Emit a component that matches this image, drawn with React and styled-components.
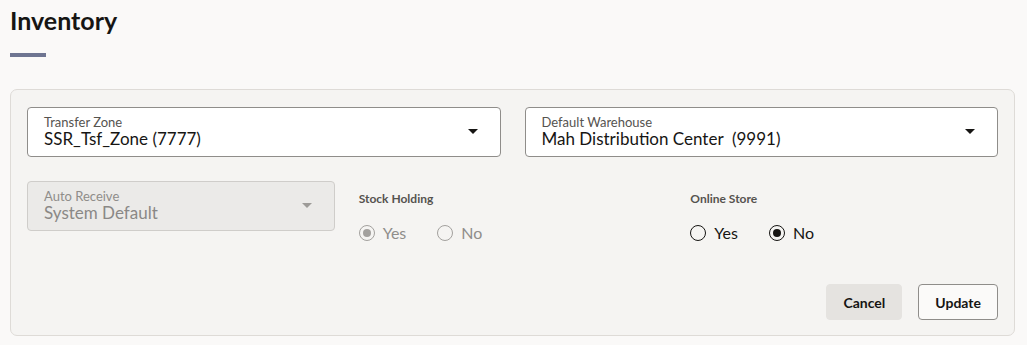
import React, { useState } from 'react';
import styled, { createGlobalStyle, css } from 'styled-components';

const GlobalStyle = createGlobalStyle`
  html, body {
    margin: 0;
    padding: 0;
    background: #faf9f8;
  }
  body {
    font-family: Lato, "Noto Sans", "Liberation Sans", sans-serif;
    color: #161513;
  }
`;

const Page = styled.div`
  padding: 4px 12px 10px 10px;
`;

const Title = styled.h1`
  margin: 0;
  font-size: 25px;
  line-height: 32px;
  font-weight: 700;
  color: #161513;
`;

const TitleBar = styled.div`
  width: 36px;
  height: 4px;
  margin-top: 17px;
  background: #6e7591;
`;

const Panel = styled.section`
  margin-top: 32px;
  padding: 17px 16px 15px 16px;
  background: #f5f4f2;
  border: 1px solid #dedbd7;
  border-radius: 7px;
  display: flex;
  flex-direction: column;
`;

const Grid = styled.div`
  display: grid;
  grid-template-columns: repeat(${(p) => p.$cols}, 1fr);
  column-gap: 24px;
  & + & {
    margin-top: 24px;
  }
`;

const SelectBox = styled.div`
  position: relative;
  height: 50px;
  box-sizing: border-box;
  padding: 7px 48px 7px 16px;
  border-radius: 4px;
  display: flex;
  flex-direction: column;
  justify-content: center;
  ${(p) =>
    p.$disabled
      ? css`
          background: #ebeae8;
          border: 1px solid #cfcdca;
          color: #8a8886;
        `
      : css`
          background: #ffffff;
          border: 1px solid #8f8d8a;
          color: #161513;
        `}
`;

const FieldLabel = styled.span`
  font-size: 13px;
  line-height: 14px;
  color: ${(p) => (p.$disabled ? '#8f8d8a' : '#55534f')};
`;

const FieldValue = styled.span`
  font-size: 17px;
  line-height: 20px;
  white-space: pre;
`;

const Caret = styled.span`
  position: absolute;
  right: 22px;
  top: 50%;
  margin-top: -3px;
  width: 0;
  height: 0;
  border-left: 5px solid transparent;
  border-right: 5px solid transparent;
  border-top: 5px solid ${(p) => (p.$disabled ? '#9d9b98' : '#161513')};
`;

const Group = styled.div`
  display: flex;
  flex-direction: column;
  padding-top: 10px;
`;

const GroupLabel = styled.span`
  font-size: 12px;
  line-height: 16px;
  font-weight: 700;
  color: #55534f;
`;

const RadioRow = styled.div`
  display: flex;
  gap: 31px;
  margin-top: 16px;
`;

const RadioItem = styled.label`
  display: flex;
  align-items: center;
  gap: 8px;
  font-size: 16px;
  line-height: 20px;
  color: ${(p) => (p.$disabled ? '#8f8d8a' : '#161513')};
  cursor: ${(p) => (p.$disabled ? 'default' : 'pointer')};
`;

const Ring = styled.span`
  box-sizing: border-box;
  width: 16px;
  height: 16px;
  border-radius: 50%;
  border: 1.5px solid ${(p) => (p.$disabled ? '#a3a19e' : '#161513')};
  display: flex;
  align-items: center;
  justify-content: center;
  &::after {
    content: '';
    width: 8px;
    height: 8px;
    border-radius: 50%;
    background: ${(p) => (p.$disabled ? '#a3a19e' : '#161513')};
    display: ${(p) => (p.$checked ? 'block' : 'none')};
  }
`;

const Actions = styled.div`
  display: flex;
  justify-content: flex-end;
  gap: 16px;
  margin-top: 41px;
`;

const Button = styled.button`
  height: 36px;
  box-sizing: border-box;
  padding: 0 16px;
  font-family: Lato, "Noto Sans", sans-serif;
  font-size: 14px;
  font-weight: 700;
  color: #161513;
  border-radius: 4px;
  cursor: pointer;
  ${(p) =>
    p.$primary
      ? css`
          background: #fbfaf9;
          border: 1px solid #8f8d8a;
        `
      : css`
          background: #e5e3e0;
          border: 1px solid #e5e3e0;
        `}
`;

const Select = ({ label, value, disabled }) => (
  <SelectBox $disabled={disabled}>
    <FieldLabel $disabled={disabled}>{label}</FieldLabel>
    <FieldValue>{value}</FieldValue>
    <Caret $disabled={disabled} />
  </SelectBox>
);

const RadioGroup = ({ label, value, onChange, disabled }) => (
  <Group>
    <GroupLabel>{label}</GroupLabel>
    <RadioRow>
      {['Yes', 'No'].map((opt) => (
        <RadioItem key={opt} $disabled={disabled} onClick={() => !disabled && onChange(opt)}>
          <Ring $checked={value === opt} $disabled={disabled} />
          {opt}
        </RadioItem>
      ))}
    </RadioRow>
  </Group>
);

const App = () => {
  const [online, setOnline] = useState('No');

  return (
    <Page>
      <GlobalStyle />
      <Title>Inventory</Title>
      <TitleBar />
      <Panel>
        <Grid $cols={2}>
          <Select label="Transfer Zone" value="SSR_Tsf_Zone (7777)" />
          <Select label="Default Warehouse" value="Mah Distribution Center  (9991)" />
        </Grid>
        <Grid $cols={3}>
          <Select label="Auto Receive" value="System Default" disabled />
          <RadioGroup label="Stock Holding" value="Yes" disabled />
          <RadioGroup label="Online Store" value={online} onChange={setOnline} />
        </Grid>
        <Actions>
          <Button>Cancel</Button>
          <Button $primary>Update</Button>
        </Actions>
      </Panel>
    </Page>
  );
};

export default App;
